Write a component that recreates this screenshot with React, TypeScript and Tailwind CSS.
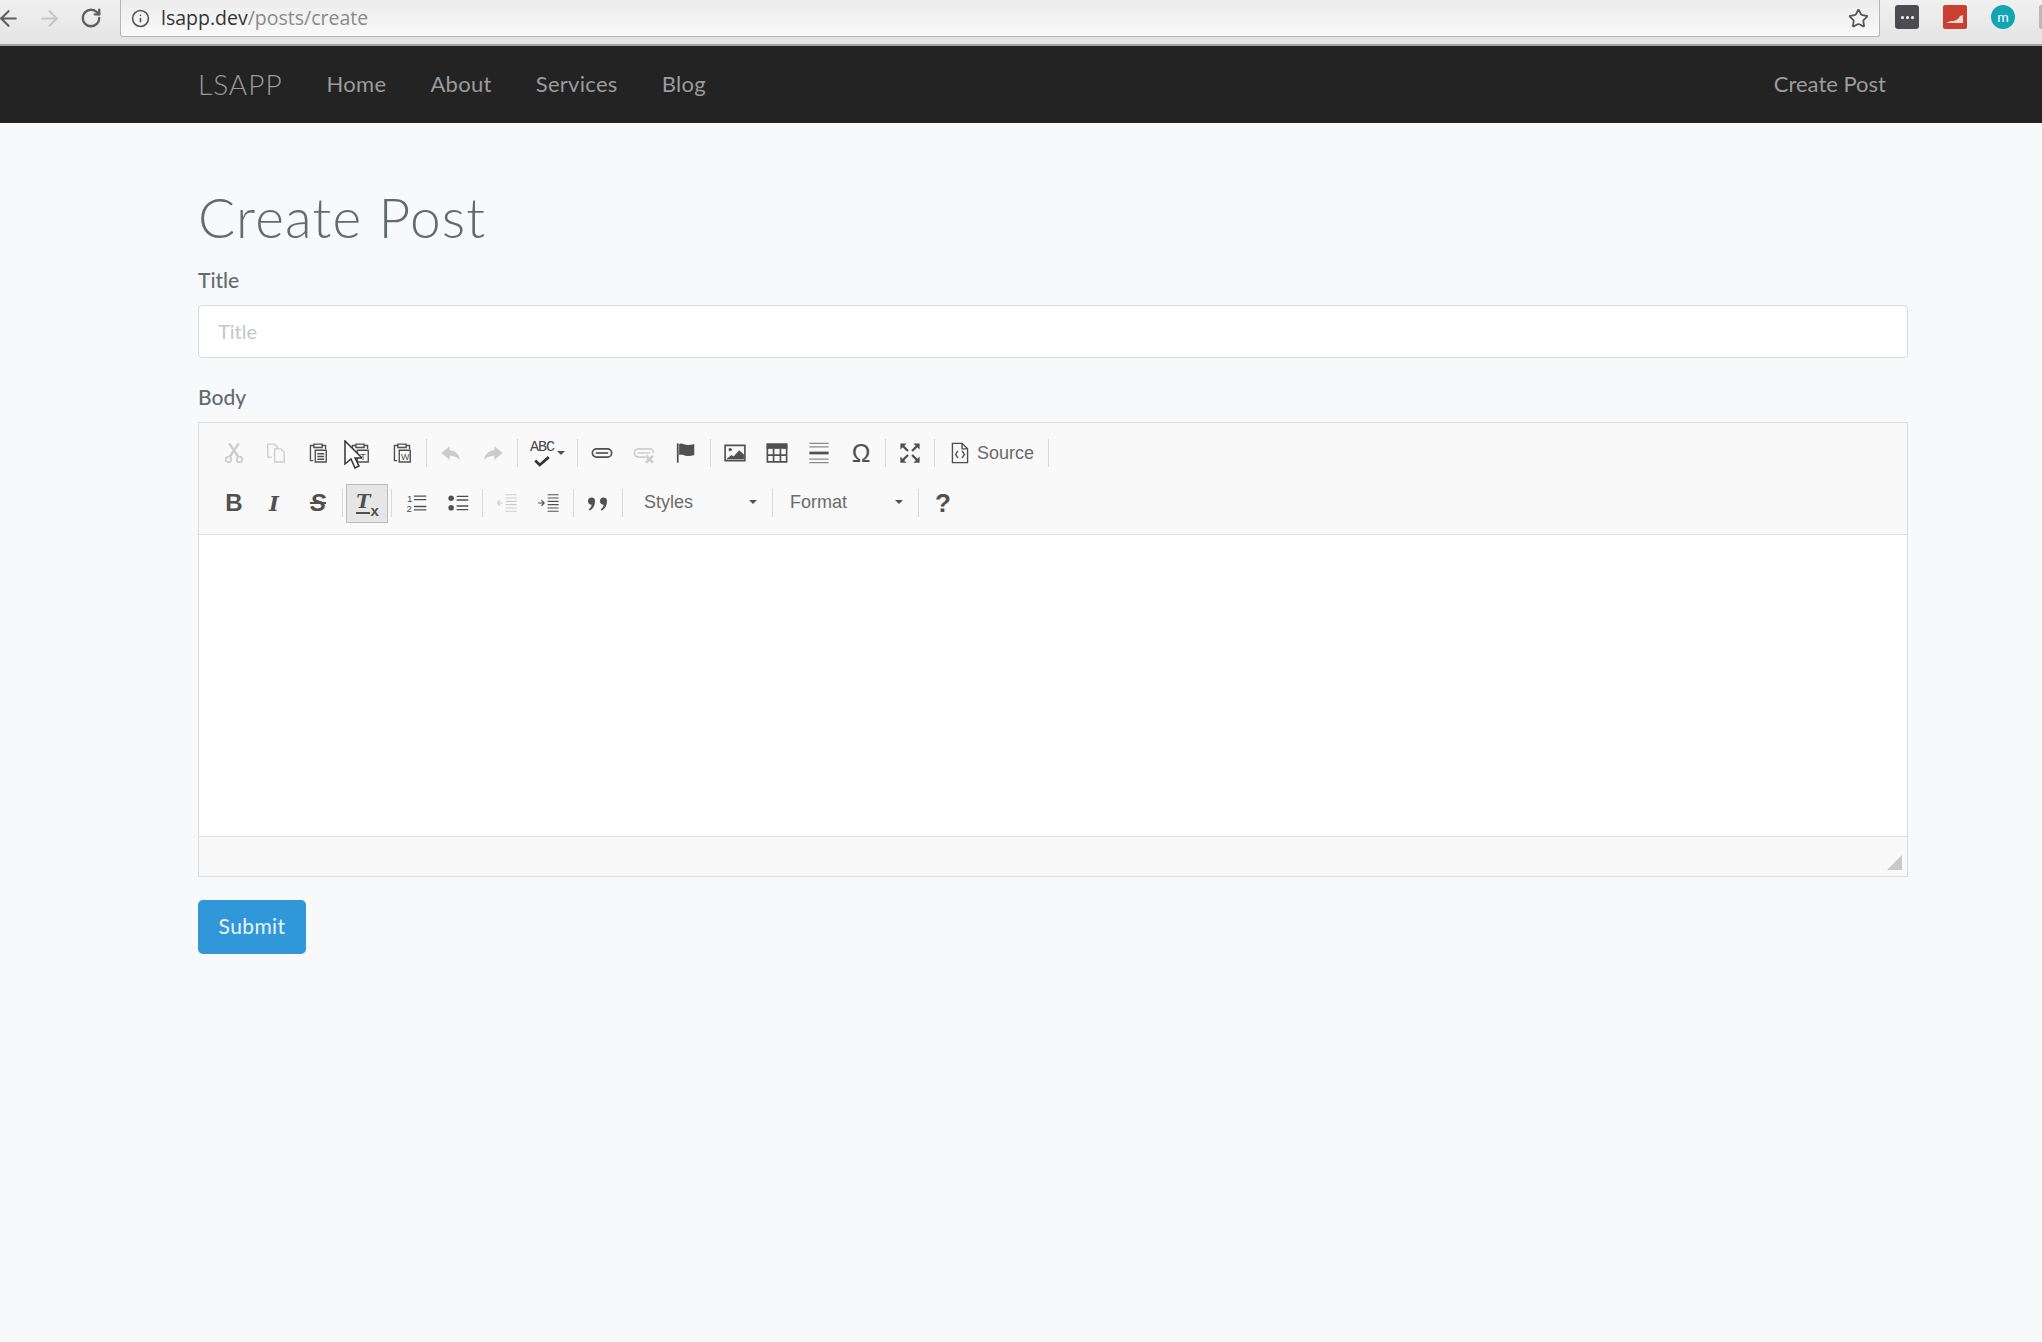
import { ArrowLeft, ArrowRight, Info, RotateCw, Star } from "lucide-react";
import type { ReactNode } from "react";

function Ico({ children }: { children: ReactNode }) {
  return (
    <svg viewBox="0 0 16 16" className="h-[22px] w-[22px]" fill="none" stroke="#505050" strokeWidth="1">
      {children}
    </svg>
  );
}

function Btn({ children, off }: { children: ReactNode; off?: boolean }) {
  return (
    <div className={off ? "flex h-[39px] w-[42px] items-center justify-center opacity-25" : "flex h-[39px] w-[42px] items-center justify-center"}>
      {children}
    </div>
  );
}

function Sep() {
  return <div className="mx-[3px] h-[28px] w-px bg-[#d9d9d9]" />;
}

function Caret() {
  return <div className="h-0 w-0 border-x-[4px] border-t-[4px] border-x-transparent border-t-[#505050]" />;
}

const clip = "M4.5 2.5H2.5v11h2M11.5 2.5h2v2.5M5 1.5h6v2.5H5z";

function Row({ children }: { children: ReactNode }) {
  return <div className="flex h-[50px] items-center">{children}</div>;
}

export default function App() {
  return (
    <div className="relative min-h-screen bg-[#f8f9fb] font-['Lato',sans-serif]">
      <div className="flex h-[46px] items-start overflow-hidden border-b-2 border-[#a3a3a3] bg-gradient-to-b from-[#f0f0f0] to-[#e4e4e4]">
        <div className="flex h-[36px] w-[120px] shrink-0 items-center">
          <ArrowLeft className="ml-[-4px] h-[25px] w-[25px] text-[#5f5f5f]" />
          <ArrowRight className="ml-[16px] h-[25px] w-[25px] text-[#c6c6c6]" />
          <RotateCw className="ml-[18px] h-[22px] w-[22px] text-[#5f5f5f]" strokeWidth={2.5} />
        </div>
        <div className="flex h-[37px] w-[1760px] shrink-0 items-center rounded-b-[3px] border border-t-0 border-[#b5b5b5] bg-gradient-to-b from-[#ececec] to-[#fafafa] pl-[10px]">
          <Info className="h-[19px] w-[19px] text-[#555]" />
          <span className="ml-[11px] font-['Open_Sans',sans-serif] text-[19.5px] text-[#333]">
            lsapp.dev<span className="text-[#8a8a8a]">/posts/create</span>
          </span>
          <Star className="ml-auto mr-[10px] h-[21px] w-[21px] text-[#555]" strokeWidth={2} />
        </div>
        <div className="flex h-[34px] shrink-0 items-center">
          <div className="ml-[15px] flex h-[24px] w-[24px] items-center justify-center rounded-[3px] bg-[#4b4b50]">
            <div className="flex gap-[2px]">
              <div className="h-[3px] w-[3px] rounded-full bg-white" />
              <div className="h-[3px] w-[3px] rounded-full bg-white" />
              <div className="h-[3px] w-[3px] rounded-full bg-white" />
            </div>
          </div>
          <div className="ml-[24px] flex h-[24px] w-[24px] items-end justify-center rounded-[2px] bg-[#c8402f] pb-[6px]">
            <svg viewBox="0 0 18 8" className="w-[18px]"><path d="M0 8l5-2 3 0 4-2 2-3 3-1v8z" fill="#f3d8cf" /></svg>
          </div>
          <div className="ml-[24px] flex h-[24px] w-[24px] items-center justify-center rounded-full bg-[#14a5b5] pb-[2px] text-[14px] text-white">
            m
          </div>
          <div className="ml-[24px] h-[24px] w-[10px] rounded-l-[2px] bg-[#b9b9b9]" />
        </div>
      </div>

      <nav className="flex h-[77px] items-center justify-between bg-[#232323] pb-[2px] pl-[198px] pr-[134px] text-[22px] tracking-[0.3px] text-[#9b9b9b]">
        <div className="flex items-center">
          <a className="mr-[22px] text-[28px] font-light tracking-[1px]">LSAPP</a>
          <a className="px-[22px]">Home</a>
          <a className="px-[22px]">About</a>
          <a className="px-[22px]">Services</a>
          <a className="px-[22px]">Blog</a>
        </div>
        <a className="px-[22px] tracking-normal">Create Post</a>
      </nav>

      <main className="pl-[198px] pr-[134px]">
        <h1 className="pt-[64px] text-[55px] font-light leading-[60px] tracking-[1.2px] text-[#636b6f]">Create Post</h1>
        <label className="mt-[18px] block text-[21px] font-medium leading-[30px] text-[#636b6f]">Title</label>
        <input
          placeholder="Title"
          className="mt-[10px] block h-[53px] w-full rounded-[4px] border border-[#d3dae0] bg-white px-[19px] pb-[2px] text-[20px] placeholder:text-[#c2c7cb]"
        />
        <label className="mt-[24px] block text-[21px] font-medium leading-[30px] text-[#636b6f]">Body</label>

        <div className="mt-[10px] border border-[#dcdcdc]">
          <div className="h-[112px] border-b border-[#dcdcdc] bg-[#f9f9f9] pl-[14px] pt-[5px]">
            <Row>
              <Btn off>
                <Ico>
                  <path d="M4.5 1l6.5 9.5M11.5 1L5 10.5" strokeWidth="1.8" />
                  <circle cx="4" cy="12.7" r="2" strokeWidth="1.3" />
                  <circle cx="12" cy="12.7" r="2" strokeWidth="1.3" />
                </Ico>
              </Btn>
              <Btn off>
                <Ico>
                  <path d="M5 11H2V1.5h5l2 2V5M7 5h4.5L14 7.5v7H7z" />
                </Ico>
              </Btn>
              <Btn>
                <Ico>
                  <path d={clip} />
                  <path d="M6 6h8v8.5H6zM7.5 8.5h5M7.5 10.5h5M7.5 12.5h5" />
                </Ico>
              </Btn>
              <Btn>
                <Ico>
                  <path d={clip} />
                  <path d="M6 6h8v8.5H6z" />
                  <text x="8" y="13" fontSize="7" fill="#505050" stroke="none" fontFamily="Liberation Sans">T</text>
                </Ico>
              </Btn>
              <Btn>
                <Ico>
                  <path d={clip} />
                  <path d="M6 6h8v8.5H6z" />
                  <text x="7.2" y="13" fontSize="6.5" fill="#505050" stroke="none" fontFamily="Liberation Sans">W</text>
                </Ico>
              </Btn>
              <Sep />
              <Btn off>
                <Ico>
                  <path d="M7 3L1 8l6 5v-3c3 0 5.500 1 7.500 3-.5-4-3.500-7-7.500-7z" fill="#474747" stroke="none" />
                </Ico>
              </Btn>
              <Btn off>
                <Ico>
                  <path d="M9 3l6 5-6 5v-3c-3 0-5.500 1-7.500 3 .5-4 3.500-7 7.500-7z" fill="#474747" stroke="none" />
                </Ico>
              </Btn>
              <Sep />
              <div className="flex h-[39px] w-[53px] items-center pl-[9px]">
                <div className="relative h-[26px] w-[26px]">
                  <span className="absolute left-0 top-[1px] font-['Liberation_Mono',monospace] text-[15px] leading-[14px] tracking-[-1px] text-[#474747]">ABC</span>
                  <svg viewBox="0 0 16 10" className="absolute bottom-[-1px] left-[3px] w-[18px]">
                    <path d="M2 4l4 4 8-7" fill="none" stroke="#333" strokeWidth="2.400" />
                  </svg>
                </div>
                <div className="ml-[1px]"><Caret /></div>
              </div>
              <Sep />
              <Btn>
                <Ico>
                  <path d="M1 8a3 3 0 013-3h8a3 3 0 010 6H4a3 3 0 01-3-3z" strokeWidth="1.200" />
                  <path d="M3.500 8h9" strokeWidth="1.200" />
                </Ico>
              </Btn>
              <Btn off>
                <Ico>
                  <path d="M9 11H4a3 3 0 010-6h8a3 3 0 013 3M3.500 8h9" strokeWidth="1.200" />
                  <path d="M9.500 10l5 5M14.500 10l-5 5" strokeWidth="2" />
                </Ico>
              </Btn>
              <Btn>
                <Ico>
                  <path d="M2 1v14" strokeWidth="1.300" />
                  <path d="M3 1.500c2-1 3 0 5 .5s4 0 6-.5v8c-2 .6-4 .9-6 .5s-3-1-5-.5z" fill="#505050" stroke="none" />
                </Ico>
              </Btn>
              <Sep />
              <Btn>
                <Ico>
                  <path d="M.8 2.500h14.400v11H.8z" strokeWidth="1.200" />
                  <circle cx="4.500" cy="5.500" r="1.200" fill="#505050" stroke="none" />
                  <path d="M1.500 12.500l4-3 1.500 1 4-4.500 3.500 3v3.500z" fill="#505050" stroke="none" />
                </Ico>
              </Btn>
              <Btn>
                <Ico>
                  <path d="M.5 1.500h15v3.500H.5z" fill="#505050" stroke="none" />
                  <path d="M1 1.500h14v13H1zM1 9.500h14M5.500 5v9.500M10.500 5v9.500" strokeWidth="1.200" />
                </Ico>
              </Btn>
              <Btn>
                <Ico>
                  <path d="M1 1h14M1 3.500h14M1 12.500h14M1 15h14" stroke="#8a8a8a" strokeWidth="0.900" />
                  <path d="M1 8h14" strokeWidth="2" />
                </Ico>
              </Btn>
              <Btn>
                <span className="font-['Liberation_Sans',sans-serif] text-[25px] leading-none text-[#505050]">Ω</span>
              </Btn>
              <Sep />
              <Btn>
                <Ico>
                  <path d="M1 1h4.500L1 5.500zM15 1v4.500L10.500 1zM1 15v-4.500L5.500 15zM15 15h-4.500L15 10.500z" fill="#505050" stroke="none" />
                  <path d="M3 3l3.500 3.500M13 3L9.500 6.500M3 13l3.500-3.500M13 13L9.500 9.500" strokeWidth="1.600" />
                </Ico>
              </Btn>
              <Sep />
              <div className="flex h-[39px] w-[107px] items-center pl-[11px]">
                <Ico>
                  <path d="M2.500 1h7l4 4v10h-11zM9.500 1v4h4" />
                  <path d="M6.500 6.500L4.800 9l1.700 2.500M9.500 6.500L11.200 9l-1.700 2.500" />
                </Ico>
                <span className="ml-[6px] font-['Liberation_Sans',sans-serif] text-[18px] text-[#6b6b6b]">Source</span>
              </div>
              <Sep />
            </Row>
            <Row>
              <Btn>
                <span className="font-['Liberation_Sans',sans-serif] text-[24px] font-bold leading-none text-[#505050]">B</span>
              </Btn>
              <Btn>
                <span className="font-['DejaVu_Serif',serif] mr-[4px] text-[21px] font-bold italic leading-none text-[#505050]">I</span>
              </Btn>
              <Btn>
                <span className="font-['Liberation_Sans',sans-serif] text-[24px] font-bold italic leading-none text-[#505050] line-through">S</span>
              </Btn>
              <Sep />
              <div className="flex h-[39px] w-[42px] items-center justify-center border border-[#bcbcbc] bg-[#e6e6e6] pl-[1px]">
                <span className="mt-[-2px] border-b-2 border-[#505050] font-['DejaVu_Serif',serif] text-[19px] font-bold italic leading-[22px] text-[#505050]">T</span>
                <span className="mt-[14px] font-['Liberation_Sans',sans-serif] text-[15px] font-bold leading-none text-[#505050]">x</span>
              </div>
              <Sep />
              <Btn>
                <Ico>
                  <path d="M6.500 3h9M6.500 5.500h9M6.500 10.500h9M6.500 13h9" strokeWidth="1" />
                  <text x="1.500" y="7" fontSize="7" fill="#505050" stroke="none" fontFamily="Liberation Sans">1</text>
                  <text x="1" y="14.500" fontSize="7" fill="#505050" stroke="none" fontFamily="Liberation Sans">2</text>
                </Ico>
              </Btn>
              <Btn>
                <Ico>
                  <circle cx="3" cy="4.500" r="2" fill="#505050" stroke="none" />
                  <circle cx="3" cy="11.500" r="2" fill="#505050" stroke="none" />
                  <path d="M7 3.200h8.500M7 5.800h8.500M7 10.200h8.500M7 12.800h8.500" strokeWidth="1" />
                </Ico>
              </Btn>
              <Sep />
              <Btn off>
                <Ico>
                  <path d="M7 2h8M7 4.400h8M7 6.800h8M7 9.200h8M7 11.600h8M7 14h8" strokeWidth="0.800" />
                  <path d="M5 8H1M3 6L1 8l2 2" strokeWidth="0.800" />
                </Ico>
              </Btn>
              <Btn>
                <Ico>
                  <path d="M7 2h8M7 4.400h8M7 6.800h8M7 9.200h8M7 11.600h8M7 14h8" strokeWidth="0.800" />
                  <path d="M0 8h4M2.500 6L4.500 8l-2 2" strokeWidth="0.800" />
                </Ico>
              </Btn>
              <Sep />
              <Btn>
                <svg viewBox="0 0 22 14" className="h-[15px] w-[22px]">
                  <path d="M1 4.500a3.500 3.500 0 117 0C8 9 6 12.500 2.500 14l-.7-1.200C3.500 11.500 4.500 10 4.700 8.300A3.500 3.500 0 011 4.500zM13 4.500a3.500 3.500 0 117 0c0 4.500-2 8-5.500 9.500l-.7-1.200c1.700-1.300 2.700-2.800 2.900-4.500A3.500 3.500 0 0113 4.500z" fill="#505050" />
                </svg>
              </Btn>
              <Sep />
              <div className="flex h-[39px] w-[143px] items-center justify-between pb-[2px] pl-[18px] pr-[12px] font-['Liberation_Sans',sans-serif] text-[18px] text-[#6b6b6b]">
                Styles
                <Caret />
              </div>
              <Sep />
              <div className="flex h-[39px] w-[139px] items-center justify-between pb-[2px] pl-[14px] pr-[12px] font-['Liberation_Sans',sans-serif] text-[18px] text-[#6b6b6b]">
                Format
                <Caret />
              </div>
              <Sep />
              <Btn>
                <span className="font-['Liberation_Sans',sans-serif] text-[26px] font-bold leading-none text-[#505050]">?</span>
              </Btn>
            </Row>
          </div>
          <div className="h-[301px] bg-white" />
          <div className="flex h-[40px] items-end justify-end border-t border-[#dcdcdc] bg-[#f9f9f9] pb-[6px] pr-[5px]">
            <svg viewBox="0 0 15 15" className="h-[15px] w-[15px]"><path d="M15 0v15H0z" fill="#c9c9c9" /></svg>
          </div>
        </div>

        <button
          type="button"
          className="mt-[23px] block h-[54px] w-[108px] rounded-[5px] bg-[#3097d9] pb-[2px] text-[21px] tracking-[0.4px] text-[#e8f4fb]"
        >
          Submit
        </button>
      </main>

      <svg viewBox="0 0 18 30" className="absolute left-[344px] top-[440px] h-[30px] w-[18px]">
        <path d="M1 1v23l6-5 4 9 4-2-4-8h7z" fill="white" stroke="#333" strokeWidth="1.500" />
      </svg>
    </div>
  );
}
